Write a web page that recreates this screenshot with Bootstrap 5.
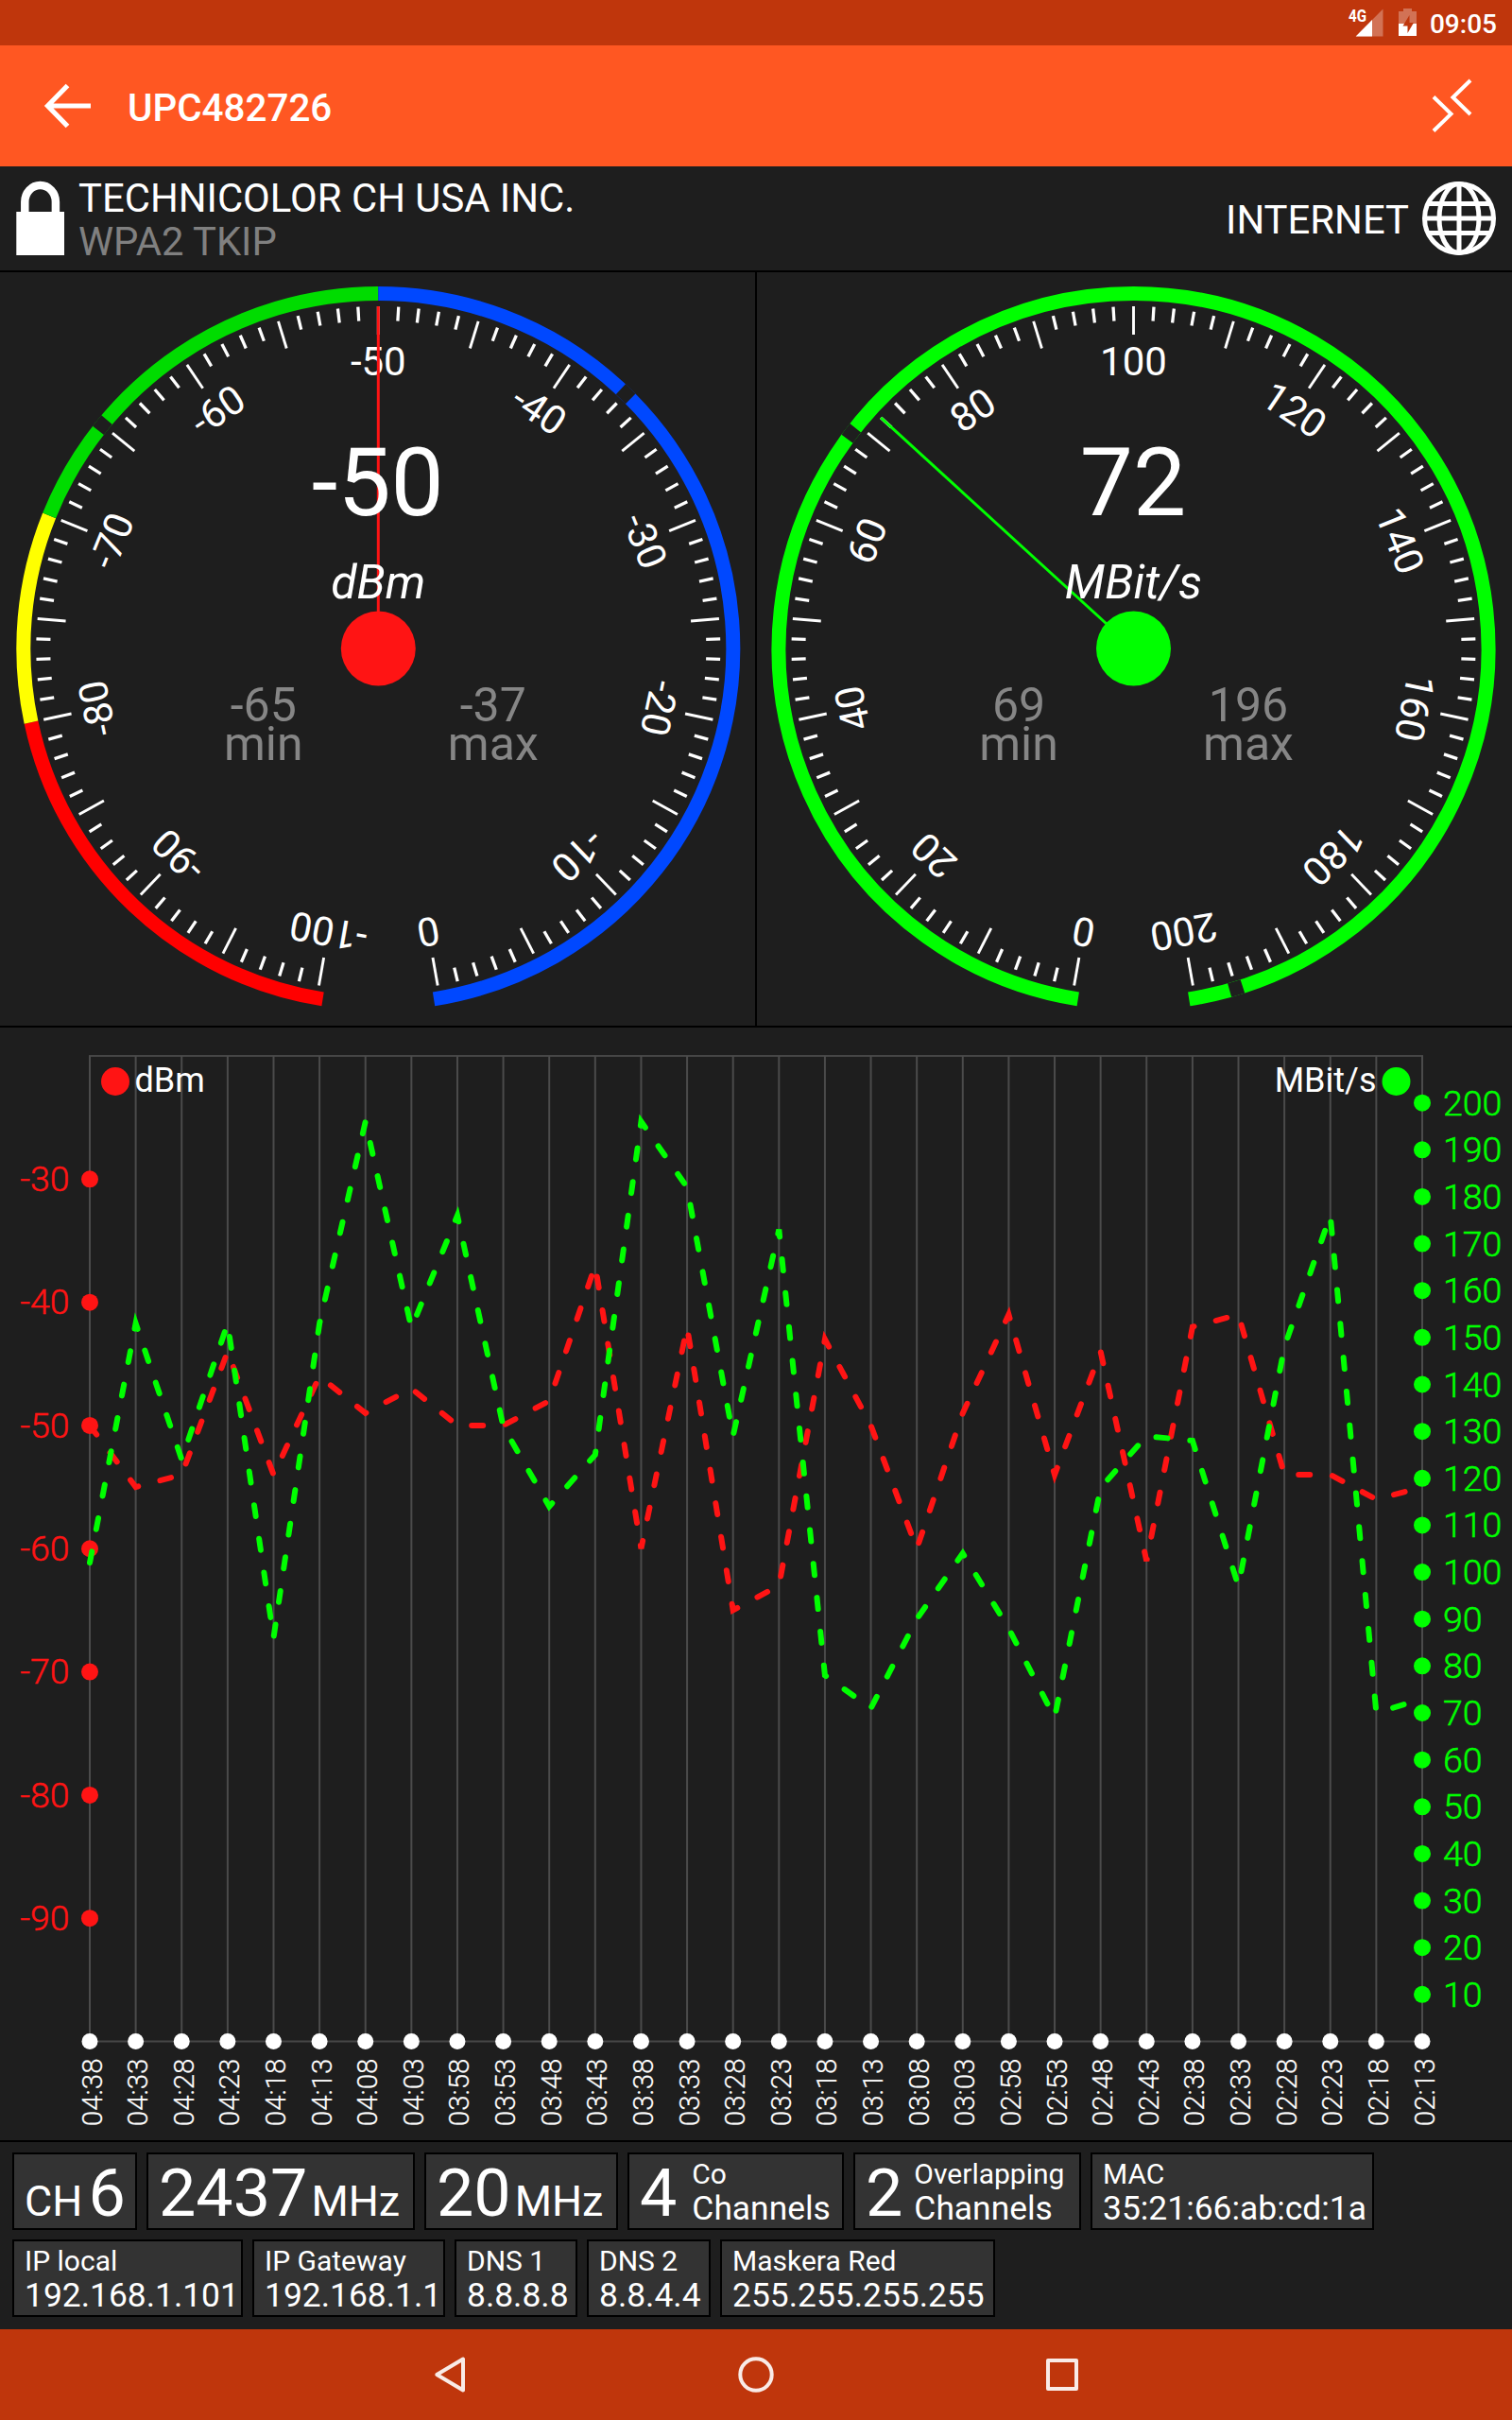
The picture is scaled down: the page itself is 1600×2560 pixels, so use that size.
<!DOCTYPE html>
<html lang="en">
<head>
<meta charset="utf-8">
<meta name="viewport" content="width=device-width, initial-scale=1">
<title>UPC482726</title>
<link rel="stylesheet" href="https://cdn.jsdelivr.net/npm/bootstrap@5.3.0/dist/css/bootstrap.min.css">
<style>
  body { width: 1600px; height: 2560px; background: #1e1e1e; color: #fff; font-family: Roboto, "Noto Sans", sans-serif; overflow: hidden; }
  svg { display: block; flex: none; }
  svg text { fill: #fff; }
  .status-bar { height: 48px; background: #bf360c; padding-right: 16px; }
  .status-icons { margin-right: -11px; }
  .clock { font-size: 28px; font-weight: 500; line-height: 45px; padding-top: 3px; margin-left: 14px; }
  .app-bar { height: 128px; background: #ff5722; padding: 0 40px; }
  .app-title { font-size: 40.4px; font-weight: 500; line-height: 46px; padding-top: 6px; margin-left: 35px; }
  .info-bar { height: 112px; border-bottom: 2px solid #000; padding: 0 16px; font-size: 41.8px; line-height: 46px; }
  .vendor { padding-top: 4px; margin-left: 14px; }
  .dim { color: #808080; }
  .net-label { padding-top: 3px; margin-right: 13px; }
  .gauges { height: 799px; border-bottom: 2px solid #000; }
  .gauges > div + div { border-left: 1px solid #000; }
  .gauges > div:first-child { border-right: 1px solid #000; }
  .history { height: 1179px; border-bottom: 2px solid #000; }
  .details { height: 198px; padding: 11px 13px; gap: 10px; }
  .details .d-flex.line { gap: 10px; }
  .tile { height: 82px; border: 2px solid #000; background: #333; padding-left: 11px; white-space: nowrap; }
  .cap { font-size: 30px; line-height: 33px; padding-top: 4px; }
  .val { font-size: 35.4px; line-height: 41px; }
  .big { font-size: 70px; line-height: 78px; padding-top: 2px; }
  .unit { font-size: 45px; }
  .sp-4 { margin-left: 4px; }
  .sp-6 { margin-left: 6px; }
  .sp-12 { margin-left: 12px; }
  .sp-16 { margin-left: 16px; }
  .nav-bar { height: 96px; background: #bf360c; }
</style>
<script src="https://cdn.jsdelivr.net/npm/bootstrap@5.3.0/dist/js/bootstrap.bundle.min.js"></script>
</head>
<body class="d-flex flex-column m-0">

<div class="status-bar d-flex align-items-center justify-content-end flex-shrink-0">
  <svg class="status-icons" width="90" height="48" viewBox="1420 0 90 48">
    <text x="1427" y="23" font-size="17.500" font-weight="700" textLength="19" lengthAdjust="spacingAndGlyphs">4G</text>
    <path d="M1434.7 38.5L1463.5 9.5V38.5Z" fill="#fff" fill-opacity=".3"/>
    <path d="M1434.7 38.5L1452 21V38.5Z" fill="#fff"/>
    <path d="M1480 12h5V9h9v3h5v13h-19Z" fill="#fff" fill-opacity=".3"/>
    <path d="M1480 25h19v13h-19Z" fill="#fff"/>
    <path d="M1491.5 16l-7 11.500h5V35l6.500-11h-4.500Z" fill="#bf360c"/>
  </svg>
  <div class="clock">09:05</div>
</div>

<header class="app-bar d-flex align-items-center justify-content-between flex-shrink-0">
  <div class="d-flex align-items-center">
    <svg width="60" height="64" viewBox="40 80 60 64"><path d="M96 112H52M71.500 90.500L50.500 112L71.500 133.500" fill="none" stroke="#fff" stroke-width="5.200"/></svg>
    <div class="app-title">UPC482726</div>
  </div>
  <svg width="48" height="64" viewBox="1512 80 48 64"><path d="M1517 102.500L1535.500 120.500L1517 138.500M1556 85L1537.500 103L1556 121" fill="none" stroke="#fff" stroke-width="4"/></svg>
</header>

<section class="info-bar d-flex align-items-center justify-content-between flex-shrink-0">
  <div class="d-flex align-items-center">
    <svg width="53" height="80" viewBox="16 192 53 80"><path d="M17.300 225H68V271H17.300Z" fill="#fff"/><path d="M26.300 226V214.500a16.300 17.500 0 0 1 32.600 0V226" fill="none" stroke="#fff" stroke-width="8.500"/></svg>
    <div class="vendor"><div>TECHNICOLOR CH USA INC.</div><div class="dim">WPA2 TKIP</div></div>
  </div>
  <div class="d-flex align-items-center">
    <div class="net-label">INTERNET</div>
    <svg width="80" height="80" viewBox="-40 -40 80 80" fill="none" stroke="#fff" stroke-width="5">
      <circle r="36.500"/><ellipse rx="21" ry="36.500"/><path d="M0-37V37M-37 0H37M-33-15.500H33M-33 15.500H33"/>
    </svg>
  </div>
</section>

<section class="gauges d-flex flex-shrink-0">
  <div class="w-50"><svg id="gaugeDbm" width="799" height="797" viewBox="0 288 799 797"></svg></div>
  <div class="w-50"><svg id="gaugeRate" width="799" height="797" viewBox="801 288 799 797"></svg></div>
</section>

<section class="history flex-shrink-0"><svg id="plot" width="1600" height="1177" viewBox="0 1087 1600 1177"></svg></section>

<section class="details d-flex flex-column flex-shrink-0">
  <div class="d-flex line">
    <div class="tile d-flex" style="width:132px"><div class="big"><span class="unit">CH</span><span class="sp-6">6</span></div></div>
    <div class="tile d-flex" style="width:284px"><div class="big">2437<span class="unit sp-4">MHz</span></div></div>
    <div class="tile d-flex" style="width:205px"><div class="big">20<span class="unit sp-4">MHz</span></div></div>
    <div class="tile d-flex" style="width:229px"><div class="big">4</div><div class="sp-16"><div class="cap">Co</div><div class="val">Channels</div></div></div>
    <div class="tile d-flex" style="width:241px"><div class="big">2</div><div class="sp-12"><div class="cap">Overlapping</div><div class="val">Channels</div></div></div>
    <div class="tile" style="width:300px"><div class="cap">MAC</div><div class="val">35:21:66:ab:cd:1a</div></div>
  </div>
  <div class="d-flex line">
    <div class="tile" style="width:244px"><div class="cap">IP local</div><div class="val">192.168.1.101</div></div>
    <div class="tile" style="width:204px"><div class="cap">IP Gateway</div><div class="val">192.168.1.1</div></div>
    <div class="tile" style="width:130px"><div class="cap">DNS 1</div><div class="val">8.8.8.8</div></div>
    <div class="tile" style="width:131px"><div class="cap">DNS 2</div><div class="val">8.8.4.4</div></div>
    <div class="tile" style="width:291px"><div class="cap">Maskera Red</div><div class="val">255.255.255.255</div></div>
  </div>
</section>

<nav class="nav-bar flex-shrink-0">
  <svg width="1600" height="96" viewBox="0 2464 1600 96" fill="none" stroke="#fff" stroke-opacity=".9" stroke-width="4" stroke-linejoin="round">
    <path d="M490 2495.500V2528.500L462.300 2512Z"/><circle cx="800" cy="2512" r="16.700"/><rect x="1109" y="2497" width="30" height="30"/>
  </svg>
</nav>

<script>
  const rad = a => a * Math.PI / 180;

  // Angles are measured clockwise from twelve o'clock; the scale runs from -170 to 170.
  function drawGauge(id, cx, cy, g) {
    const pt = (a, r) => (cx + r * Math.sin(rad(a))).toFixed(2) + ' ' + (cy - r * Math.cos(rad(a))).toFixed(2);
    const arc = (a, b, c) => `<path d="M${pt(a, 375.5)}A375.5 375.5 0 ${b - a > 180 ? 1 : 0} 1 ${pt(b, 375.5)}" fill="none" stroke="${c}" stroke-width="15"/>`;
    let s = g.bands.map(b => arc(b[0], b[1], b[2])).join('');
    s += g.marks.map(a => arc(a - 1.1, a + 1.1, '#1e1e1e')).join('');
    for (let i = -50; i <= 50; i++) {
      const major = i % 5 === 0;
      s += `<path d="M${pt(i * 3.4, major ? 332 : 347)}L${pt(i * 3.4, 362)}" stroke="#fff" stroke-width="${major ? 2.9 : 3.3}"/>`;
    }
    g.labels.forEach((t, i) => {
      s += `<text font-size="42" text-anchor="middle" x="${cx}" y="${cy - 289.5}" transform="rotate(${-170 + i * 34} ${cx} ${cy})">${t}</text>`;
    });
    s += `<path d="M${cx} ${cy}L${pt(g.angle, 362)}" stroke="${g.color}" stroke-width="3"/><circle cx="${cx}" cy="${cy}" r="39.5" fill="${g.color}"/>`;
    const t = (x, y, size, txt, extra) => `<text x="${x}" y="${y}" font-size="${size}" text-anchor="middle" ${extra || ''}>${txt}</text>`;
    const dim = 'style="fill:#868686"';
    s += t(cx - 0.5, 544.5, 100, g.value) + t(cx, 633, 50, g.unit, 'font-style="italic"');
    s += t(cx - 121.5, 763, 50, g.min, dim) + t(cx - 121.5, 804, 50, 'min', dim);
    s += t(cx + 121.5, 763, 50, g.max, dim) + t(cx + 121.5, 804, 50, 'max', dim);
    document.getElementById(id).innerHTML = s;
  }
  drawGauge('gaugeDbm', 400.3, 686, {
    bands: [[-171, -102, '#f00'], [-102, -68, '#ff0'], [-68, 0, '#00dc00'], [0, 171, '#0048ff']],
    marks: [-51, 44.2], labels: ['-100', '-90', '-80', '-70', '-60', '-50', '-40', '-30', '-20', '-10', '0'],
    angle: 0, color: '#ff1414', value: '-50', unit: 'dBm', min: '-65', max: '-37'
  });
  drawGauge('gaugeRate', 1199.5, 686, {
    bands: [[-171, 171, '#0f0']],
    marks: [-52.7, 163.2], labels: [0, 20, 40, 60, 80, 100, 120, 140, 160, 180, 200],
    angle: -47.6, color: '#0f0', value: '72', unit: 'MBit/s', min: '69', max: '196'
  });

  const dbm = [-50, -55, -54, -44, -54, -46, -49, -47, -50, -50, -48, -37, -60, -42, -65, -63, -43, -50, -60, -49, -41, -54, -44, -61, -42, -41, -54, -54, -56, -55];
  const rate = [102, 153, 124, 153, 86, 153, 196, 152, 176, 131, 114, 125, 196, 182, 129, 173, 78, 71, 90, 104, 88, 69, 118, 129, 128, 97, 148, 176, 70, 73];
  const L = 95, R = 1505, T = 1117, B = 2159.5, step = (R - L) / 29;
  const yd = v => T + (-20 - v) * (B - T) / 80, yr = v => B - v * (B - T) / 210;
  const X = i => L + i * step;
  let s = `<path d="M${L - 1} ${T}H${R + 1}M${L} ${B}H${R}" stroke="#464646" stroke-width="2"/>`;
  for (let i = 0; i < 30; i++) s += `<path d="M${X(i)} ${T}V${B}" stroke="#4b4b4b" stroke-width="2"/>`;
  const line = (data, y, c) => `<path d="M${data.map((v, i) => X(i).toFixed(2) + ' ' + y(v).toFixed(2)).join('L')}" fill="none" stroke="${c}" stroke-width="6" stroke-linecap="round" stroke-dasharray="12 24"/>`;
  for (let v = -30; v >= -90; v -= 10)
    s += `<circle cx="${L}" cy="${yd(v)}" r="9" fill="#ff1414"/><text style="fill:#ff1414" x="73.5" y="${yd(v) + 12.8}" font-size="37.5" font-weight="300" stroke="#ff1414" stroke-width=".5" text-anchor="end">${v}</text>`;
  s += line(dbm, yd, '#ff1414') + line(rate, yr, '#0f0');
  for (let v = 10; v <= 200; v += 10)
    s += `<circle cx="${R}" cy="${yr(v)}" r="9" fill="#0f0"/><text style="fill:#0f0" x="1527" y="${yr(v) + 13}" font-size="37.5" font-weight="300" stroke="#0f0" stroke-width=".5">${v}</text>`;
  for (let i = 0; i < 30; i++) {
    const m = 278 - i * 5, x = X(i) + 12.5;
    const label = String(Math.floor(m / 60)).padStart(2, '0') + ':' + String(m % 60).padStart(2, '0');
    s += `<circle cx="${X(i)}" cy="${B}" r="8.5" fill="#fff"/><text x="${x}" y="2177.5" transform="rotate(-90 ${x} 2177.5)" font-size="29.5" font-weight="300" stroke="#fff" stroke-width=".25" text-anchor="end">${label}</text>`;
  }
  s += `<circle cx="122" cy="1144" r="15" fill="#ff1414"/><text x="142.500" y="1155" font-size="36">dBm</text>`;
  s += `<circle cx="1477.500" cy="1144" r="15" fill="#0f0"/><text x="1456.500" y="1155" font-size="36" text-anchor="end">MBit/s</text>`;
  document.getElementById('plot').innerHTML = s;
</script>
</body>
</html>
